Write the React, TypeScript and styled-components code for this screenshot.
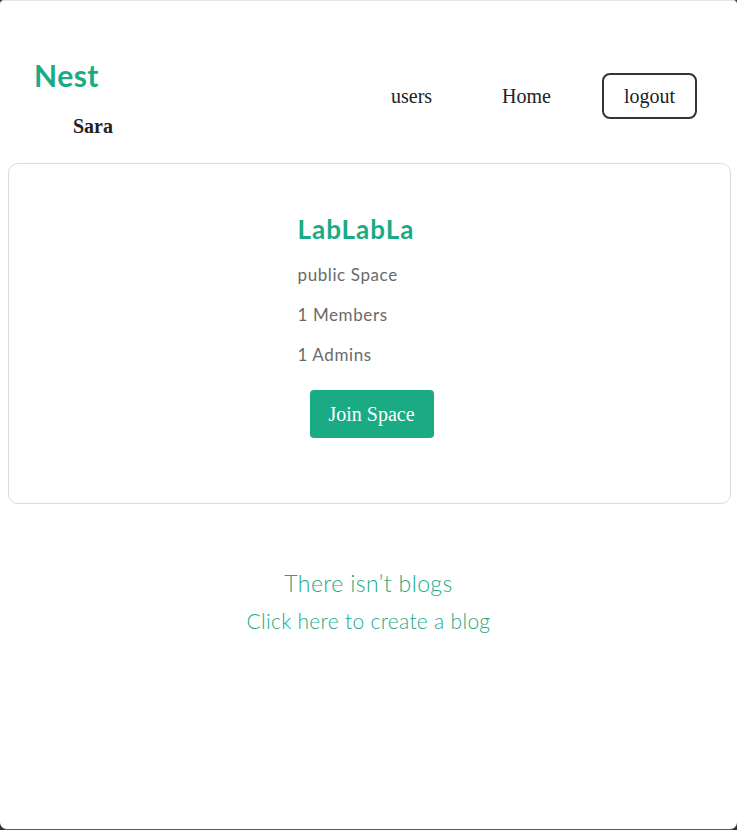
import React, { FC } from 'react'
import styled, { createGlobalStyle } from 'styled-components'

const GREEN = '#1aab84'

const GlobalStyle = createGlobalStyle`
  html, body {
    margin: 0;
    padding: 0;
    background: #2e2e2e;
  }
  * {
    box-sizing: border-box;
  }
`

const App: FC = () => (
  <>
    <GlobalStyle />
    <Frame>
      <Header>
        <Brand>
          <Logo>Nest</Logo>
          <UserName>Sara</UserName>
        </Brand>
        <Nav>
          <NavLink>users</NavLink>
          <NavLink>Home</NavLink>
          <Logout>logout</Logout>
        </Nav>
      </Header>

      <Card>
        <CardBody>
          <Title>LabLabLa</Title>
          <Info>public Space</Info>
          <Info>1 Members</Info>
          <Info>1 Admins</Info>
          <JoinButton>Join Space</JoinButton>
        </CardBody>
      </Card>

      <Empty>
        <EmptyTitle>There isn’t blogs</EmptyTitle>
        <CreateLink>Click here to create a blog</CreateLink>
      </Empty>
    </Frame>
  </>
)

const Frame = styled.div`
  height: 830px;
  background: #fff;
  border-top: 1px solid #e6e6e6;
  border-bottom: 1px solid #5a5a5a;
  border-radius: 4px 4px 7px 7px;
  overflow: hidden;
`

const Header = styled.header`
  height: 162px;
  display: flex;
  justify-content: space-between;
  align-items: flex-start;
  padding: 56px 40px 0 34px;
`

const Brand = styled.div`
  display: flex;
  flex-direction: column;
`

const Logo = styled.h1`
  margin: 0;
  font-family: Lato, 'Open Sans', sans-serif;
  font-size: 30px;
  font-weight: 700;
  letter-spacing: 0.5px;
  line-height: 36px;
  color: ${GREEN};
`

const UserName = styled.h3`
  margin: 22px 0 0 39px;
  font-family: 'Liberation Serif', 'Times New Roman', serif;
  font-size: 20px;
  font-weight: 700;
  line-height: 22px;
  color: #222;
`

const Nav = styled.nav`
  display: flex;
  align-items: center;
  margin-top: 16px;
`

const NavLink = styled.a`
  margin-right: 70px;
  font-family: 'Liberation Serif', 'Times New Roman', serif;
  font-size: 20px;
  color: #222;
  cursor: pointer;
`

const Logout = styled.button`
  width: 95px;
  height: 46px;
  margin-left: -19px;
  border: 2px solid #333;
  border-radius: 8px;
  background: #fff;
  font-family: 'Liberation Serif', 'Times New Roman', serif;
  font-size: 20px;
  color: #222;
  cursor: pointer;
`

const Card = styled.section`
  margin: 0 6px 0 8px;
  height: 341px;
  border: 1px solid #dcdcdc;
  border-radius: 10px;
  display: flex;
  justify-content: center;
  padding-top: 47px;
`

const CardBody = styled.div`
  display: flex;
  flex-direction: column;
  align-items: flex-start;
  width: 148px;
  margin-left: 4px;
`

const Title = styled.h2`
  margin: 0 0 17px;
  font-family: Lato, 'Open Sans', sans-serif;
  font-size: 26px;
  font-weight: 700;
  letter-spacing: 1px;
  line-height: 36px;
  color: ${GREEN};
`

const Info = styled.p`
  margin: 0 0 18px;
  font-family: Lato, 'Open Sans', sans-serif;
  font-size: 17px;
  letter-spacing: 0.6px;
  line-height: 22px;
  color: #6a6a6a;
`

const JoinButton = styled.button`
  align-self: center;
  margin-top: 6px;
  width: 124px;
  height: 48px;
  border: none;
  border-radius: 4px;
  background: ${GREEN};
  color: #fff;
  font-family: 'Liberation Serif', 'Times New Roman', serif;
  font-size: 20px;
  cursor: pointer;
`

const Empty = styled.div`
  display: flex;
  flex-direction: column;
  align-items: center;
  padding-top: 65px;
  font-family: Lato, 'Open Sans', sans-serif;
  color: ${GREEN};
`

const EmptyTitle = styled.p`
  margin: 0;
  font-size: 23px;
  font-weight: 300;
  letter-spacing: 0.4px;
  line-height: 28px;
`

const CreateLink = styled.a`
  margin-top: 11px;
  font-size: 21px;
  font-weight: 300;
  letter-spacing: 0.3px;
  line-height: 26px;
  cursor: pointer;
`

export default App
